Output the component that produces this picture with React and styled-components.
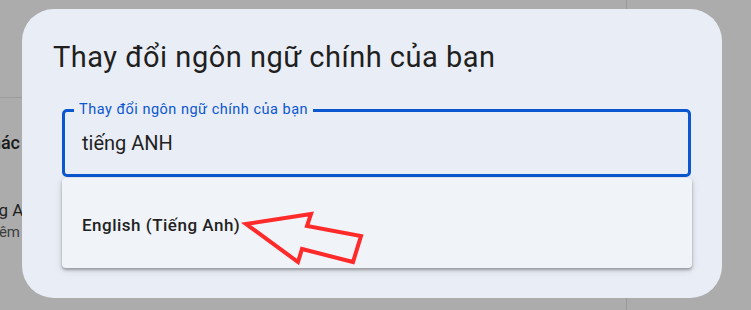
import React from "react";
import styled, { createGlobalStyle } from "styled-components";

const Global = createGlobalStyle`
  html, body { margin: 0; padding: 0; }
  body { width: 751px; height: 310px; overflow: hidden; font-family: Roboto, "Noto Sans", Arial, sans-serif; }
  * { box-sizing: border-box; }
`;

const Screen = styled.div`
  position: relative;
  width: 751px;
  height: 310px;
  background: #acacac;
  overflow: hidden;
  display: flex;
`;

const Pane = styled.div`
  width: 627px;
  height: 100%;
  border-right: 1px solid #9a9a9a;
  display: flex;
  flex-direction: column;
`;

const PaneHeader = styled.div`
  height: 98px;
  flex: none;
  border-bottom: 1px solid #9c9c9c;
`;

const ClipRow = styled.div`
  display: flex;
  justify-content: flex-end;
  width: ${(p) => p.$end}px;
  margin-top: ${(p) => p.$top}px;
  white-space: nowrap;
  color: ${(p) => p.$color};
  font-size: ${(p) => p.$size}px;
  line-height: ${(p) => p.$lh}px;
  font-weight: ${(p) => p.$weight || 400};
`;

const Tail = styled.span`
  width: 0;
  overflow: visible;
`;

const Dialog = styled.div`
  position: absolute;
  left: 22px;
  top: 9px;
  width: 700px;
  height: 289px;
  background: #e9edf5;
  border-radius: 32px;
  padding-top: 30px;
  display: flex;
  flex-direction: column;
`;

const Title = styled.h2`
  margin: 0 0 0 31px;
  font-size: 29px;
  letter-spacing: 0.5px;
  line-height: 36px;
  font-weight: 400;
  color: #1f1f1f;
`;

const Field = styled.div`
  position: relative;
  margin: 34px 0 0 40px;
  width: 629px;
  height: 68px;
  border: 3px solid #0b57d0;
  border-radius: 5px;
  padding-left: 17px;
  display: flex;
  align-items: center;
  font-size: 20px;
  line-height: 24px;
  color: #1f1f1f;
`;

const FloatLabel = styled.span`
  position: absolute;
  left: 9px;
  top: -11px;
  padding: 0 5px;
  background: #e9edf5;
  color: #0b57d0;
  font-size: 14.5px;
  letter-spacing: 0.5px;
  line-height: 18px;
  white-space: nowrap;
`;

const Menu = styled.div`
  position: relative;
  margin: 1px 0 0 40px;
  width: 630px;
  height: 90px;
  background: #f0f3f8;
  border-radius: 4px;
  box-shadow: 0 2px 3px rgba(0, 0, 0, 0.3), 0 2px 8px rgba(0, 0, 0, 0.12);
  display: flex;
  align-items: center;
  padding: 4px 0 0 20px;
`;

const Option = styled.div`
  font-size: 17px;
  letter-spacing: 0.5px;
  line-height: 20px;
  font-weight: 500;
  color: #222;
`;

const Annotation = styled.svg`
  position: absolute;
  left: 0;
  top: 0;
  width: 630px;
  height: 90px;
  overflow: visible;
  pointer-events: none;
`;

export default function App() {
  return (
    <>
      <Global />
      <Screen>
        <Pane>
          <PaneHeader />
          <ClipRow $end={20} $top={35} $size={18} $lh={20} $weight={500} $color="#1b1b1b">
            Các ngôn ngữ khác
          </ClipRow>
          <ClipRow $end={8} $top={46} $size={17} $lh={22} $color="#1f1f1f">
            <span>Tiếng</span>
            <Tail>&nbsp;Anh (Mỹ)</Tail>
          </ClipRow>
          <ClipRow $end={20} $top={2} $size={15} $lh={18} $color="#3d3d3d">
            Thêm
          </ClipRow>
        </Pane>
        <Dialog>
          <Title>Thay đổi ngôn ngữ chính của bạn</Title>
          <Field>
            <FloatLabel>Thay đổi ngôn ngữ chính của bạn</FloatLabel>
            tiếng ANH
          </Field>
          <Menu>
            <Option>English (Tiếng Anh)</Option>
            <Annotation viewBox="0 0 630 90">
              <polygon
                points="184,46 249,36 245,48 299,58 291,84 240,71 236,84"
                fill="none"
                stroke="#ff2a2a"
                strokeWidth="4"
                strokeLinejoin="miter"
              />
            </Annotation>
          </Menu>
        </Dialog>
      </Screen>
    </>
  );
}
